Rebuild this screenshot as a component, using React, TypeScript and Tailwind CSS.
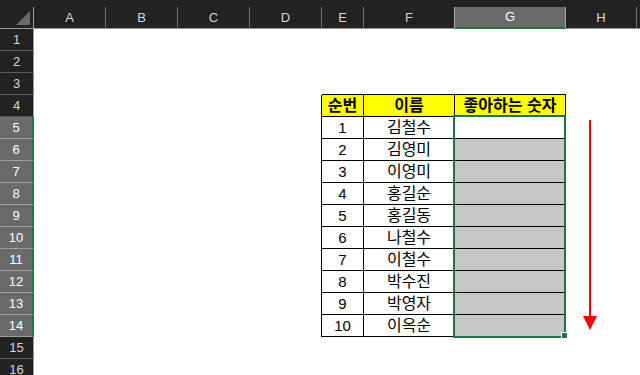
import React from "react";

const cols = [
  { l: "A", w: "w-[72px]" },
  { l: "B", w: "w-[72px]" },
  { l: "C", w: "w-[72px]" },
  { l: "D", w: "w-[72px]" },
  { l: "E", w: "w-[42px]" },
  { l: "F", w: "w-[91px]" },
  { l: "G", w: "w-[111px]" },
  { l: "H", w: "w-[71px]" },
];

const names = ["김철수", "김영미", "이영미", "홍길순", "홍길동", "나철수", "이철수", "박수진", "박영자", "이옥순"];

function cellText(r: number, c: number): string {
  if (r === 4) {
    if (c === 4) return "순번";
    if (c === 5) return "이름";
    if (c === 6) return "좋아하는 숫자";
  }
  if (r >= 5 && r <= 14) {
    if (c === 4) return String(r - 4);
    if (c === 5) return names[r - 5];
  }
  return "";
}

function cellClass(r: number, c: number): string {
  const parts: string[] = [];
  const inTable = r >= 4 && r <= 14;
  if (r === 3 && c >= 4 && c <= 6) parts.push("border-b border-b-black");
  if (inTable && c === 3) parts.push("border-r border-r-black");
  if (inTable && c >= 4 && c <= 6) parts.push("border-r border-b border-black");
  if (r === 4 && c >= 4 && c <= 6) parts.push("bg-[#ffff00] font-bold");
  if (r >= 6 && r <= 14 && c === 6) parts.push("bg-[#c6c6c6]");
  if (r >= 5 && c === 4) parts.push("text-[15px]");
  else parts.push("text-[16px]");
  return parts.join(" ");
}

export default function App() {
  const rows = Array.from({ length: 16 }, (_, i) => i + 1);
  return (
    <div className="relative w-[640px] h-[375px] overflow-hidden bg-white font-['Liberation_Sans','Noto_Sans_CJK_KR',sans-serif]">
      <div className="h-[7px] bg-[#222222]" />
      {/* column header */}
      <div className="flex h-[22px] bg-[#222222] text-[13px] text-[#d6d6d6]">
        <div className="relative w-[34px] shrink-0 border-r border-b border-[#9b9b9b]">
          <svg className="absolute left-0 top-0" width="33" height="21" viewBox="0 0 33 21">
            <polygon points="30,4 30,18 16,18" fill="#6b6b6b" />
          </svg>
        </div>
        {cols.map((c, i) => (
          <div
            key={c.l}
            className={
              i === 6
                ? `${c.w} shrink-0 flex items-center justify-center bg-[#6a6a6a] text-white border-r border-r-[#a8a8a8] border-b-2 border-b-[#217346]`
                : i === 5
                ? `${c.w} shrink-0 flex items-center justify-center border-r border-r-[#a8a8a8] border-b border-b-[#9b9b9b]`
                : `${c.w} shrink-0 flex items-center justify-center border-r border-r-[#6e6e6e] border-b border-b-[#9b9b9b]`
            }
          >
            {c.l}
          </div>
        ))}
        <div className="flex-1 border-b border-b-[#9b9b9b]" />
      </div>
      {/* body rows */}
      {rows.map((r) => {
        const sel = r >= 5 && r <= 14;
        return (
          <div key={r} className="flex h-[22px]">
            <div
              className={
                sel
                  ? "w-[34px] shrink-0 flex items-center justify-center bg-[#6a6a6a] text-[13px] text-white border-b border-b-[#a0a0a0] border-r-2 border-r-[#217346]"
                  : "w-[34px] shrink-0 flex items-center justify-center bg-[#222222] text-[13px] text-[#d6d6d6] border-b border-b-[#5a5a5a] border-r border-r-[#9b9b9b]"
              }
            >
              {r}
            </div>
            {cols.map((c, ci) => (
              <div
                key={c.l}
                className={`${c.w} shrink-0 flex items-center justify-center text-black leading-none ${cellClass(r, ci)}`}
              >
                {cellText(r, ci)}
              </div>
            ))}
            <div className="flex-1" />
          </div>
        );
      })}
      {/* selection border */}
      <div className="absolute left-[453px] top-[115px] w-[113px] h-[223px] border-2 border-[#217346]" />
      <div className="absolute left-[561px] top-[332px] w-[7px] h-[7px] bg-[#217346] border border-white" />
      {/* red arrow */}
      <svg className="absolute left-[583px] top-[120px]" width="15" height="211" viewBox="0 0 15 211">
        <rect x="6" y="0" width="2" height="198" fill="#ff0000" />
        <polygon points="0,196 14,196 7,210" fill="#ff0000" />
      </svg>
    </div>
  );
}
